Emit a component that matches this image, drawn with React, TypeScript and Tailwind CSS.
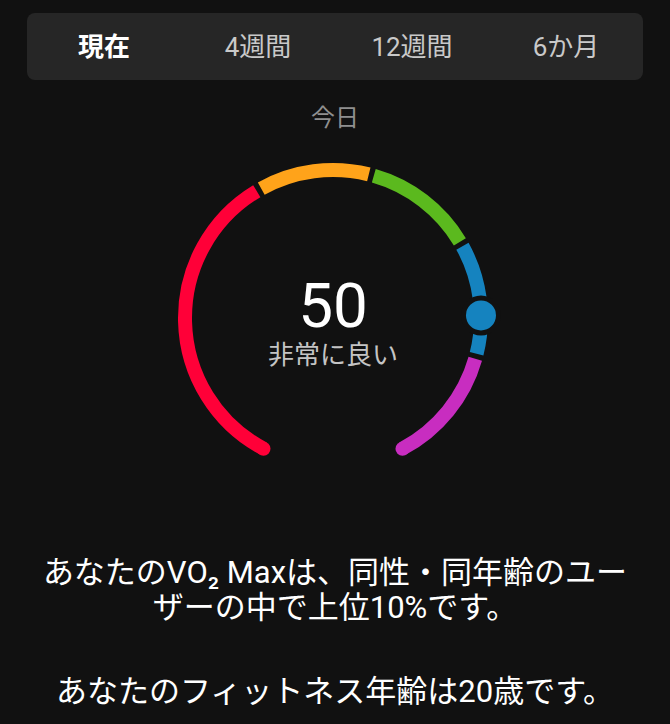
import React from 'react';

const CX = 170;
const CY = 170;
const R = 148;

// point on the ring, angle in degrees, screen coords (y down)
const pt = (deg: number) => {
  const a = (deg * Math.PI) / 180;
  return [CX + R * Math.cos(a), CY + R * Math.sin(a)];
};

const arcPath = (from: number, to: number) => {
  const [x1, y1] = pt(from);
  const [x2, y2] = pt(to);
  const span = (to - from + 360) % 360;
  const large = span > 180 ? 1 : 0;
  return `M ${x1.toFixed(2)} ${y1.toFixed(2)} A ${R} ${R} 0 ${large} 1 ${x2.toFixed(2)} ${y2.toFixed(2)}`;
};

const segments = [
  { from: 118, to: 239, color: '#ff0038' },
  { from: 241, to: 284, color: '#ffa31a' },
  { from: 286, to: 329, color: '#5bb91e' },
  { from: 331, to: 374, color: '#1583bf' },
  { from: 376, to: 422, color: '#c82dc0' },
];

const tabs = ['現在', '4週間', '12週間', '6か月'];

const Gauge: React.FC = () => {
  const [dx, dy] = pt(-1);
  return (
    <div className="relative w-[340px] h-[340px]">
      <svg width={340} height={340} viewBox="0 0 340 340">
        {segments.map((s, i) => (
          <path
            key={i}
            d={arcPath(s.from, s.to)}
            fill="none"
            stroke={s.color}
            strokeWidth={14}
            strokeLinecap="butt"
          />
        ))}
        {/* round ends on the outer tips only */}
        <circle cx={pt(118)[0]} cy={pt(118)[1]} r={7} fill="#ff0038" />
        <circle cx={pt(62)[0]} cy={pt(62)[1]} r={7} fill="#c82dc0" />
        {/* marker */}
        <circle cx={dx} cy={dy} r={20} fill="#111111" />
        <circle cx={dx} cy={dy} r={15} fill="#1583bf" />
      </svg>
      <div className="absolute inset-0 flex flex-col items-center pt-[127px]">
        <div className="text-[62px] leading-[62px] text-white">50</div>
        <div className="mt-[3px] text-[26px] leading-[30px] text-[#c4c4c4]">非常に良い</div>
      </div>
    </div>
  );
};

export default function App() {
  return (
    <div
      className="min-h-[724px] w-full bg-[#111111] pt-[13px]"
      style={{ fontFamily: 'Roboto, "Noto Sans CJK JP", sans-serif' }}
    >
      <div className="mx-[27px] grid h-[67px] grid-cols-4 items-center rounded-lg bg-[#262626]">
        {tabs.map((t, i) => (
          <div
            key={t}
            className={`text-center text-[26px] leading-[30px] ${
              i === 0 ? 'font-bold text-white' : 'text-[#c9c9c9]'
            }`}
          >
            {t}
          </div>
        ))}
      </div>

      <div className="mt-[23px] text-center text-[24px] leading-[30px] text-[#8f8f8f]">今日</div>

      <div className="mt-[15px] flex justify-center pr-[4px]">
        <Gauge />
      </div>

      <div className="mt-[67px] text-center text-[31px] leading-[35px] text-white">
        <p className="whitespace-nowrap">
          あなたのVO₂ Maxは、同性・同年齢のユー
          <br />
          ザーの中で上位10%です。
        </p>
        <p className="mt-[49px] whitespace-nowrap">あなたのフィットネス年齢は20歳です。</p>
      </div>
    </div>
  );
}
